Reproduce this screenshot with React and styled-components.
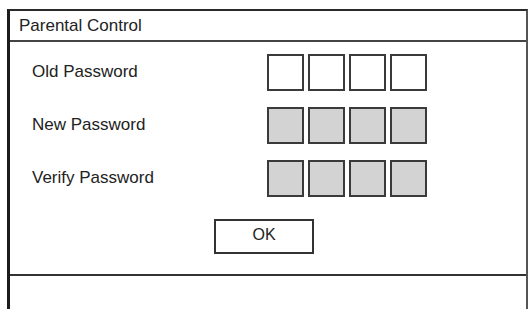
import React from "react";
import styled, { createGlobalStyle } from "styled-components";

const GlobalStyle = createGlobalStyle`
html, body {
  margin:0;
  padding:0;
  background:#fff;
  overflow:hidden;
}
body {
  font-family:"Liberation Sans", Arial, sans-serif;
  color:#222;
}
`;

const rows = [
    { label: "Old Password", filled: false },
    { label: "New Password", filled: true },
    { label: "Verify Password", filled: true },
];

function App() {
    return (
        <>
            <GlobalStyle />
            <Frame>
                <TitleBar>Parental Control</TitleBar>
                <Content>
                    <Form>
                        {rows.map(row => (
                            <React.Fragment key={row.label}>
                                <Label>{row.label}</Label>
                                <Digits>
                                    {[0, 1, 2, 3].map(i => (
                                        <Digit key={i} $filled={row.filled} />
                                    ))}
                                </Digits>
                            </React.Fragment>
                        ))}
                    </Form>
                    <ButtonRow>
                        <OkButton>OK</OkButton>
                    </ButtonRow>
                </Content>
                <Footer />
            </Frame>
        </>
    );
}

const Frame = styled.div`
margin:9px 4px 0 7px;
border-left:3px solid #1c1c1c;
border-top:2px solid #2a2a2a;
border-right:2px solid #555;
height:calc(100vh - 9px);
box-sizing:border-box;
display:flex;
flex-direction:column;
`;

const TitleBar = styled.div`
height:31px;
display:flex;
align-items:center;
padding-left:9px;
padding-top:1px;
box-sizing:border-box;
font-size:17px;
border-bottom:2px solid #444;
`;

const Content = styled.div`
height:234px;
box-sizing:border-box;
padding-top:12px;
border-bottom:2px solid #333;
`;

const Form = styled.div`
display:grid;
grid-template-columns:235px auto;
row-gap:16px;
padding-left:22px;
align-items:center;
`;

const Label = styled.div`
font-size:17px;
margin-top:-1px;
`;

const Digits = styled.div`
display:flex;
gap:4px;
`;

const Digit = styled.div`
width:37px;
height:37px;
box-sizing:border-box;
border:2px solid #3a3a3a;
background:${p => (p.$filled ? "#d3d3d3" : "#fff")};
`;

const ButtonRow = styled.div`
display:flex;
justify-content:center;
padding-right:8px;
margin-top:22px;
`;

const OkButton = styled.div`
width:100px;
height:35px;
box-sizing:border-box;
border:2px solid #333;
display:flex;
justify-content:center;
align-items:center;
padding-bottom:4px;
font-size:16px;
`;

const Footer = styled.div`
flex:1;
`;

export default App;
